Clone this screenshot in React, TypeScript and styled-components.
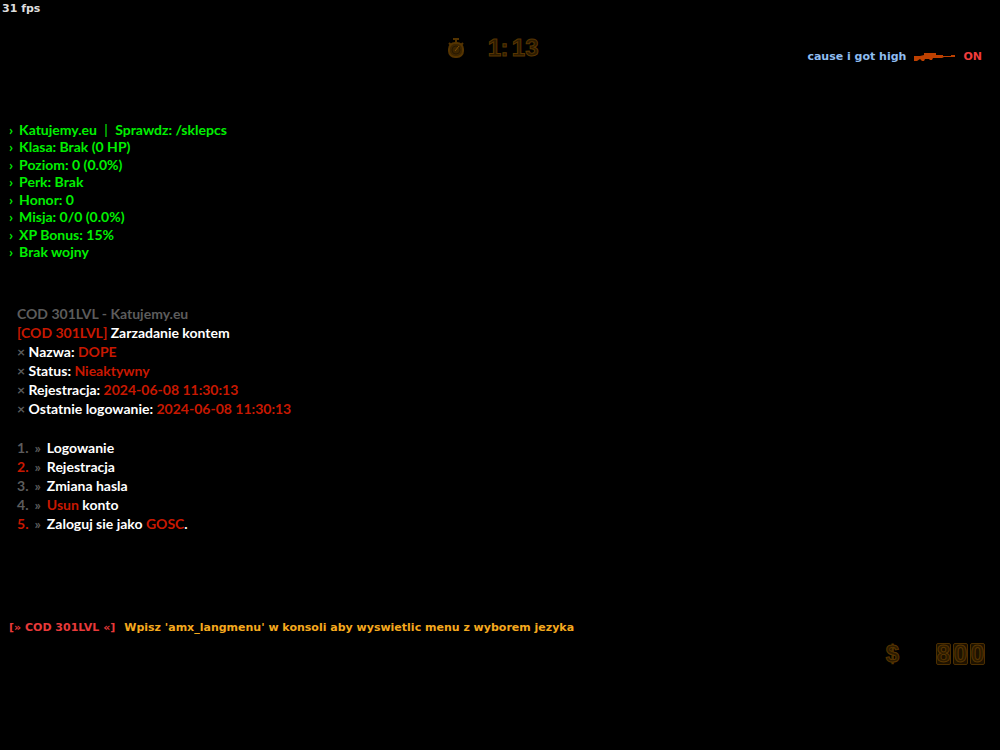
import React from 'react';
import styled, { createGlobalStyle } from 'styled-components';

const Global = createGlobalStyle`
  * { box-sizing: border-box; }
  body { margin: 0; background: #000; }
`;

const hudFont = `Lato, "Open Sans", sans-serif`;
const chatFont = `"DejaVu Sans", sans-serif`;

const Screen = styled.main`
  min-height: 100vh;
  display: flex;
  flex-direction: column;
  background: #000;
  color: #fff;
  overflow: hidden;
`;
const Fps = styled.div`
  padding: 1px 2px 0;
  font: 600 11px/16px ${chatFont};
  color: #ddd;
`;
const TopBar = styled.header`
  display: grid;
  grid-template-columns: 1fr auto 1fr;
  align-items: start;
  padding: 19px 18px 0 4px;
`;
const Timer = styled.div`
  grid-column: 2;
  display: flex;
  align-items: center;
  gap: 26px;
  height: 24px;
`;
const Digits = styled.div`
  display: flex;
  align-items: center;
  gap: 2px;
`;
const Digit = styled.span<{ $boxed?: boolean; $narrow?: boolean }>`
  width: ${p => (p.$narrow ? 8 : 15)}px;
  height: 22px;
  display: flex;
  justify-content: center;
  align-items: center;
  border: ${p => (p.$boxed ? '1px solid #4c2e00' : '0')};
  border-radius: 2px;
  background: ${p => (p.$boxed ? '#1c1100' : 'transparent')};
  color: #2c1b00;
  -webkit-text-stroke: 1px #573500;
  font: 700 24px/20px "Liberation Sans", sans-serif;
`;
const Seconds = styled(Digits)`
  margin-left: 4px;
`;
const KillFeed = styled.div`
  justify-self: end;
  display: flex;
  align-items: center;
  gap: 8px;
  margin-top: 13px;
  font: 700 11px/16px ${chatFont};
`;
const Killer = styled.span` color: #8fbdf0; `;
const Victim = styled.span` color: #f03c3c; `;
const Stats = styled.ul`
  list-style: none;
  display: grid;
  align-content: space-between;
  min-height: 139px;
  margin: 56px 0 0;
  padding: 0 9px;
  color: #00f000;
  font: 700 14px/17px ${hudFont};
`;
const Stat = styled.li`
  display: flex;
  gap: 6px;
`;
const Divider = styled.span`
  padding: 0 4px;
  font-weight: 400;
`;
const Menu = styled.section`
  margin: 44px 0 0;
  padding: 0 17px;
  font: 700 14px/19px ${hudFont};
`;
const Line = styled.p` margin: 0; white-space: pre; `;
const Dim = styled.span` color: #5c5c5c; `;
const Red = styled.span` color: #c81800; `;
const Options = styled.ol`
  list-style: none;
  margin: 20px 0 0;
  padding: 0;
`;
const Option = styled.button`
  display: flex;
  gap: 6px;
  padding: 0;
  border: 0;
  background: none;
  color: #fff;
  font: inherit;
`;
const Chat = styled.p`
  display: flex;
  gap: 9px;
  margin: 86px 0 0;
  padding: 0 9px;
  color: #f5a91e;
  font: 700 11px/18px ${chatFont};
`;
const Tag = styled.span` color: #e83a3a; `;
const Money = styled.footer`
  display: flex;
  justify-content: flex-end;
  align-items: center;
  gap: 36px;
  padding: 6px 15px 0;
`;

const stats: React.ReactNode[] = [
  <>Katujemy.eu <Divider>|</Divider> Sprawdz: /sklepcs</>,
  'Klasa: Brak (0 HP)',
  'Poziom: 0 (0.0%)',
  'Perk: Brak',
  'Honor: 0',
  'Misja: 0/0 (0.0%)',
  'XP Bonus: 15%',
  'Brak wojny',
];
const account = [['Nazwa', 'DOPE'], ['Status', 'Nieaktywny'], ['Rejestracja', '2024-06-08 11:30:13'], ['Ostatnie logowanie', '2024-06-08 11:30:13']];
const options: { label: React.ReactNode; hot?: boolean }[] = [
  { label: 'Logowanie' },
  { label: 'Rejestracja', hot: true },
  { label: 'Zmiana hasla' },
  { label: <><Red>Usun</Red> konto</> },
  { label: <>Zaloguj sie jako <Red>GOSC</Red>.</>, hot: true },
];

const Stopwatch = () => (
  <svg width="18" height="22" viewBox="0 0 18 22" aria-hidden="true">
    <path d="M6 2h6M9 2v4M2 6l2 2M16 6l-2 2" stroke="#553400" strokeWidth="2" />
    <rect x="2" y="6" width="14" height="14" rx="6" fill="#3c2500" stroke="#553400" strokeWidth="2" />
    <circle cx="9" cy="13" r="4" fill="none" stroke="#281800" />
    <path d="M8 14l4-5" stroke="#7a4b00" strokeWidth="1" />
  </svg>
);
const Rifle = () => (
  <svg width="41" height="10" viewBox="0 0 41 10" aria-hidden="true">
    <path d="M0 4h6l4-1V1h12v2h7v1h8V3h4v2H30l-2 1h-9l-1 2h-2l-1-1h-4l-1 2H8L6 7 3 9H0z" fill="#bd4000" />
  </svg>
);

export default function App() {
  return (
    <Screen>
      <Global />
      <Fps>31 fps</Fps>
      <TopBar>
        <Timer>
          <Stopwatch />
          <Digits>
            <Digit $narrow>1</Digit><Digit $narrow>:</Digit>
            <Seconds><Digit $narrow>1</Digit><Digit>3</Digit></Seconds>
          </Digits>
        </Timer>
        <KillFeed><Killer>cause i got high</Killer><Rifle /><Victim>ON</Victim></KillFeed>
      </TopBar>
      <Stats>{stats.map((s, i) => <Stat key={i}><span>›</span><span>{s}</span></Stat>)}</Stats>
      <Menu>
        <Line><Dim>COD 301LVL - Katujemy.eu</Dim></Line>
        <Line><Red>[COD 301LVL]</Red> Zarzadanie kontem</Line>
        {account.map(([k, v]) => <Line key={k}><Dim>×</Dim> {k}: <Red>{v}</Red></Line>)}
        <Options>
          {options.map((o, i) => (
            <li key={i}>
              <Option>{o.hot ? <Red>{i + 1}.</Red> : <Dim>{i + 1}.</Dim>}<Dim>»</Dim><span>{o.label}</span></Option>
            </li>
          ))}
        </Options>
      </Menu>
      <Chat><Tag>[» COD 301LVL «]</Tag><span>Wpisz 'amx_langmenu' w konsoli aby wyswietlic menu z wyborem jezyka</span></Chat>
      <Money>
        <Digit>$</Digit>
        <Digits><Digit $boxed>8</Digit><Digit $boxed>0</Digit><Digit $boxed>0</Digit></Digits>
      </Money>
    </Screen>
  );
}
